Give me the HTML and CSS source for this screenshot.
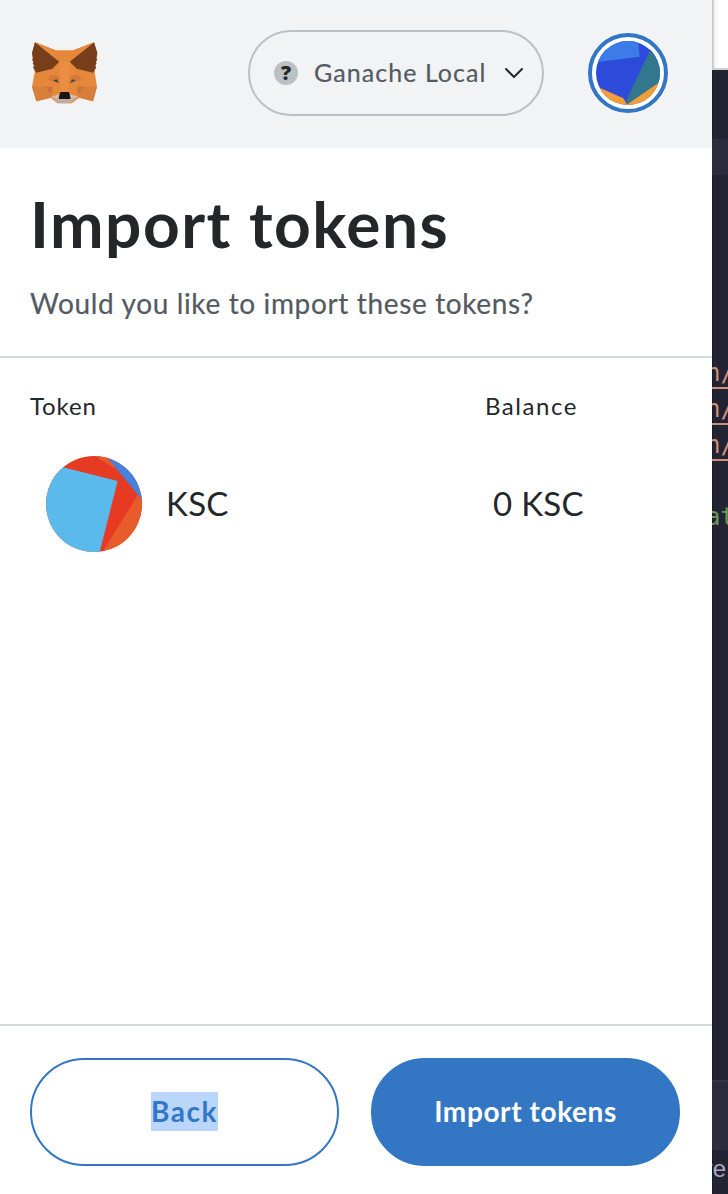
FILE: index.html
```html
<!DOCTYPE html>
<html lang="en">
<head>
<meta charset="utf-8">
<title>Import tokens</title>
<link rel="stylesheet" href="styles.css">
</head>
<body>
<div class="screen">
  <div class="popup">
    <header class="topbar">
      <svg class="fox" viewBox="30 30 210 198">
        <path fill="#e6883b" d="M45 37 107 61H160L222 37 232 70 224 127 231 170 219 214 178 203 155 220H112L92 203 49 214 36 170 44 127 36 70Z"/>
        <path fill="#d67e3a" d="M36 170H97L92 203 49 214ZM231 170H171L178 203 219 214Z"/>
        <path fill="#c8733a" d="M76 170H97L94 196ZM192 170H171L174 196Z"/>
        <path fill="#d67a3a" d="M82 149 92 135 116 137 119 160ZM186 149 176 135 152 137 149 160Z"/>
        <path fill="#763e1a" d="M45 37 118 95 97 116 49 128 39 112 43 107 38 100 41 95 36 90 39 85 36 69ZM222 37 149 95 170 116 219 128 229 112 225 107 230 100 227 95 232 90 229 85 232 69Z"/>
        <path fill="#e6883b" d="M45 37 107 61 118 94ZM222 37 160 61 149 94Z"/>
        <path fill="#e98e43" d="M118 94H149L145 188H122Z"/>
        <path fill="#c0ad9e" d="M97 203 117 207H151L171 203 151 220H116Z"/>
        <path fill="#d5bfb2" d="M92 201 118 192 116 207ZM176 201 149 192 151 207Z"/>
        <path fill="#394957" d="M99 151 111 148 116 159 108 156ZM167 151 156 148 151 159 159 156Z"/>
        <path fill="#161616" d="M121 186H147L152 205 149 207H118L116 205Z"/>
      </svg>
      <div class="network">
        <span class="unknown">?</span>
        <span class="network-name">Ganache Local</span>
        <svg class="chevron" viewBox="0 0 20 12"><path d="M2 2 10 10 18 2"/></svg>
      </div>
      <div class="account">
        <svg class="avatar" viewBox="48 51 192 192">
          <defs><clipPath id="avatar-clip"><circle cx="144" cy="147" r="96"/></clipPath></defs>
          <g clip-path="url(#avatar-clip)">
            <path fill="#2c4bdb" d="M48 51H240V243H48Z"/>
            <path fill="#3c7be8" d="M40 116 179 98 173 40H40Z"/>
            <path fill="#f19e38" d="M48 186 130 223 141 241 240 171V250H48Z"/>
            <path fill="#33778e" d="M219 60 139 229 142 241 245 170V60Z"/>
          </g>
        </svg>
      </div>
    </header>
    <section class="intro">
      <h1 class="title">Import tokens</h1>
      <p class="question">Would you like to import these tokens?</p>
    </section>
    <main class="tokens">
      <div class="labels"><span class="label-token">Token</span><span class="label-balance">Balance</span></div>
      <div class="row">
        <svg class="coin" viewBox="78 228 288 288">
          <defs><clipPath id="coin-clip"><circle cx="222" cy="372" r="144"/></clipPath></defs>
          <g clip-path="url(#coin-clip)">
            <path fill="#e63a22" d="M78 228H366V516H78Z"/>
            <path fill="#e85b2b" d="M222 226H262L288 268ZM354 344 245 520H370V344Z"/>
            <path fill="#4482dc" d="M258 228 354 345 370 362V228Z"/>
            <path fill="#5bbaec" d="M70 247 293 303 238 520H70Z"/>
          </g>
        </svg>
        <span class="symbol">KSC</span>
        <span class="amount">0 KSC</span>
      </div>
    </main>
    <footer class="actions">
      <button class="button secondary"><span class="selected">Back</span></button>
      <button class="button primary"><span class="button-text">Import tokens</span></button>
    </footer>
  </div>
  <aside class="editor">
    <div class="editor-top"></div>
    <div class="editor-tabs"></div>
    <div class="editor-band"></div>
    <div class="code">
      <div class="code-line"><span class="link">n/</span></div>
      <div class="code-line"><span class="link">n/</span></div>
      <div class="code-line"><span class="link">n/</span></div>
      <div class="code-line"></div>
      <div class="code-line comment">at</div>
    </div>
    <div class="editor-panel"></div>
    <div class="editor-status">re</div>
  </aside>
</div>
</body>
</html>
```

FILE: styles.css
```css
* { box-sizing: border-box; }
body { margin: 0; font-family: Lato, "Liberation Sans", sans-serif; color: #24272a; }
.screen { display: flex; width: 728px; height: 1194px; overflow: hidden; }
.popup { display: flex; flex-direction: column; width: 712px; background: #fff; }
.topbar { display: flex; align-items: center; height: 148px; padding: 0 44px 2px 30px; background: #f2f3f5; }
.fox { width: 70px; height: 66px; }
.network { display: flex; align-items: center; width: 296px; height: 86px; margin-left: 148px; padding-left: 24px; border: 2px solid #bbc0c5; border-radius: 43px; }
.unknown { width: 24px; height: 24px; border-radius: 50%; background: #bbc0c5; font-family: "Open Sans", sans-serif; font-size: 20px; font-weight: 800; line-height: 23px; text-align: center; }
.network-name { width: 174px; margin-left: 16px; padding-bottom: 2px; font-size: 25px; letter-spacing: 1.05px; line-height: 32px; white-space: nowrap; color: #535a61; -webkit-text-stroke: .2px; }
.chevron { width: 20px; height: 12px; margin-left: 16px; fill: none; stroke: #24272a; stroke-width: 2; stroke-linecap: round; stroke-linejoin: round; }
.account { width: 80px; height: 80px; margin-left: 44px; padding: 4px; border: 4px solid #3376c4; border-radius: 50%; background: #fff; }
.avatar, .coin { display: block; }
.avatar { width: 64px; height: 64px; }
.intro { height: 210px; padding: 32px 30px 0; border-bottom: 2px solid #d6d9dc; }
.title { margin: 0; font-size: 64px; font-weight: 700; line-height: 88px; letter-spacing: 1.5px; white-space: nowrap; }
.question { margin: 15px 0 0; font-size: 28px; line-height: 40px; letter-spacing: .64px; white-space: nowrap; color: #535a61; -webkit-text-stroke: .2px; }
.tokens { flex: 1; padding: 31px 30px; }
.labels { display: flex; height: 34px; font-size: 24px; line-height: 34px; }
.label-token { width: 455px; letter-spacing: .85px; }
.label-balance { letter-spacing: 1.55px; }
.row { display: flex; align-items: center; height: 96px; margin: 33px 0 0 16px; font-size: 33px; letter-spacing: .3px; }
.coin { width: 96px; height: 96px; }
.symbol { width: 327px; margin-left: 24px; }
.symbol, .amount { padding-bottom: 2px; }
.actions { display: flex; gap: 32px; height: 170px; padding: 32px 32px 28px 30px; border-top: 2px solid #d6d9dc; }
.button { flex: 1; height: 108px; padding: 0 0 2px; border: 2px solid #3376c4; border-radius: 54px; font: 700 28px Lato, "Liberation Sans", sans-serif; }
.secondary { background: #fff; color: #3376c4; letter-spacing: 1.5px; }
.primary { background: #3376c4; color: #fff; letter-spacing: .6px; }
.selected { display: inline-block; height: 39px; line-height: 39px; background: #bad6fb; }
.editor { display: flex; flex-direction: column; width: 16px; overflow: hidden; background: #222333; box-shadow: inset 1px 0 #191a27; font-family: "DejaVu Sans Mono", monospace; font-size: 24px; }
.editor-top { height: 70px; border-bottom: 2px solid #cfcfcf; background: linear-gradient(90deg, #bcbcbc, #f5f5f5 3px, #fff 7px); }
.editor-tabs { height: 69px; }
.editor-band { height: 36px; background: #2a2c3d; }
.code { height: 905px; padding-top: 180px; }
.code-line { display: flex; height: 36px; margin-left: -6px; line-height: 36px; }
.link { height: 34px; border-bottom: 2px solid #ce9178; color: #ce9178; }
.comment { color: #6a9955; }
.editor-panel { height: 70px; border-top: 2px solid #343647; background: #2b2c3d; }
.editor-status { display: flex; justify-content: flex-end; padding-right: 2px; line-height: 38px; font-family: "Liberation Sans", sans-serif; color: #a9a9c5; }
```
